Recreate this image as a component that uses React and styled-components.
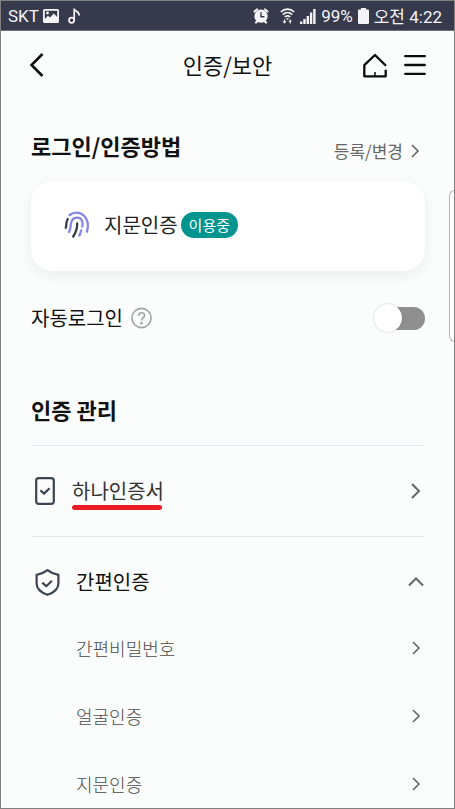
import React, { useState } from 'react'
import styled, { createGlobalStyle } from 'styled-components';

const subMenus = [
  { id: 1, name: '간편비밀번호' },
  { id: 2, name: '얼굴인증' },
  { id: 3, name: '지문인증' },
];

const PictureIcon = () => (
  <svg width="16" height="14" viewBox="0 0 16 14" aria-hidden="true">
    <path fill="#f4f4f7" fillRule="evenodd" d="M1.5 0h13A1.5 1.5 0 0 1 16 1.500v11a1.500 1.500 0 0 1-1.500 1.500h-13A1.500 1.500 0 0 1 0 12.500v-11A1.500 1.500 0 0 1 1.500 0zM1.800 1.800v8.200l3.200-3.200 2 1.600 3.800-4 3.400 3.600V1.800z" />
    <circle cx="4.500" cy="4" r="1.400" fill="#f4f4f7" />
  </svg>
);

const NoteIcon = () => (
  <svg width="13" height="16" viewBox="0 0 13 16" fill="none" stroke="#f4f4f7" strokeWidth="1.7" aria-hidden="true">
    <circle cx="3.600" cy="12.200" r="2.600" />
    <path d="M6.200 12.200V1.200c.5 2.200 5 1.500 5 6.300" strokeLinejoin="round" />
  </svg>
);

const AlarmIcon = () => (
  <svg width="16" height="16" viewBox="0 0 16 16" aria-hidden="true">
    <g stroke="#f4f4f7" strokeWidth="2.200" strokeLinecap="round">
      <path d="M1.500 3.500l2.500-2M14.500 3.500L12 1.500M3 14.500l2-2M13 14.500l-2-2" />
    </g>
    <circle cx="8" cy="8.200" r="6.600" fill="#f4f4f7" />
    <path d="M8 4.300v4.400h3.400" fill="none" stroke="#37394c" strokeWidth="1.400" />
  </svg>
);

const WifiIcon = () => (
  <svg width="15" height="16" viewBox="0 0 15 16" fill="none" stroke="#f4f4f7" strokeWidth="1.600" aria-hidden="true">
    <path d="M.8 4c3.800-3.800 9.600-3.800 13.400 0M2.800 6.600c2.800-2.700 6.600-2.700 9.400 0M4.800 9c1.700-1.500 3.700-1.500 5.400 0" />
    <path d="M5.800 10.200h3.400l-1.700 1.700z" fill="#f4f4f7" stroke="none" />
    <path d="M4.500 11.500v2.500M10.200 15.500V13" strokeWidth="1.200" />
    <path d="M2.500 13.200h4l-2 2.500zM8.500 13.500h3.400l-1.700-2.200z" fill="#f4f4f7" stroke="none" />
  </svg>
);

const SignalIcon = () => (
  <svg width="16" height="16" viewBox="0 0 16 16" fill="#f4f4f7" aria-hidden="true">
    <path d="M0 13.500h2.400V16H0zM3.300 11h2.400v5H3.300zM6.600 8H9v8H6.600zM9.900 4.500h2.400V16H9.900zM13.200 1h2.400v15h-2.400z" />
  </svg>
);

const BatteryIcon = () => (
  <svg width="11" height="16" viewBox="0 0 11 16" fill="#f4f4f7" aria-hidden="true">
    <path d="M3 0h5v1.600h2a1 1 0 0 1 1 1V15a1 1 0 0 1-1 1H1a1 1 0 0 1-1-1V2.600a1 1 0 0 1 1-1h2z" />
  </svg>
);

const BackIcon = () => (
  <svg width="16" height="26" viewBox="0 0 16 26" fill="none" stroke="#0c0c0c" strokeWidth="2.500" aria-hidden="true">
    <path d="M13.500 2L2.500 13l11 11" />
  </svg>
);

const HomeIcon = () => (
  <svg width="26" height="26" viewBox="0 0 26 26" fill="none" stroke="#0c0c0c" strokeWidth="2.300" strokeLinejoin="round" aria-hidden="true">
    <path d="M24 13.800L13 3 2.300 13.200V24.300h21.400v-6.600" />
    <path d="M13 20v4" strokeWidth="1.500" />
  </svg>
);

const MenuIcon = () => (
  <svg width="22" height="22" viewBox="0 0 22 22" fill="none" stroke="#0c0c0c" strokeWidth="2.300" strokeLinecap="round" aria-hidden="true">
    <path d="M1.200 2.200h19.600M1.200 11h19.600M1.200 19.800h19.600" />
  </svg>
);

const FingerprintIcon = () => (
  <svg width="26" height="28" viewBox="0 0 26 28" fill="none" strokeWidth="2.300" strokeLinecap="round" aria-hidden="true">
    <g stroke="#8587e3">
      <path d="M5.600 4C9.500.7 16 .6 20 4.700c4.200 4.400 4.600 10.300 2.900 16" />
      <path d="M5 21c2.200-3.300 1.300-6.200 2.100-9.300C8.800 5.200 17 5 18.300 11c.4 1.600.3 3 0 4.600" />
      <path d="M17.300 19.300c-.5 2.100-1.200 3.900-2 5.300" />
    </g>
    <g stroke="#343e4a">
      <path d="M3.700 8c-1.700 2.700-1.200 6.200-1.900 8.800" />
      <path d="M13.200 12.500c.2 5-1.700 9.500-4 13" />
    </g>
  </svg>
);

const PhoneCheckIcon = () => (
  <svg width="20" height="28" viewBox="0 0 20 28" fill="none" stroke="#3b4450" strokeWidth="2.200" strokeLinejoin="round" aria-hidden="true">
    <rect x="1.200" y="1.200" width="17.600" height="25.600" rx="2.600" />
    <path d="M5.400 13.200l3.600 3.400 5.600-5.400" />
  </svg>
);

const ShieldCheckIcon = () => (
  <svg width="26" height="28" viewBox="0 0 26 28" fill="none" stroke="#3b4450" strokeWidth="2.200" strokeLinejoin="round" aria-hidden="true">
    <path d="M12.500 2.200c2.900 2.300 6.700 3.900 10.900 4.700v8.500c0 5.200-4.300 9-10.900 11.400C5.900 24.400 1.600 20.600 1.600 15.400V6.900C5.800 6.100 9.600 4.500 12.500 2.200z" />
    <path d="M7.300 14.600l4 3.600 5.600-5.400" />
  </svg>
);

const QuestionIcon = () => (
  <svg width="22" height="22" viewBox="0 0 22 22" fill="none" stroke="#a3a3a3" strokeWidth="1.600" aria-hidden="true">
    <circle cx="10.500" cy="11" r="9.600" />
    <path d="M7.700 8.700c0-3.900 5.900-3.800 5.900-.3 0 2.300-3 2.400-3 5.200" strokeWidth="1.700" />
    <circle cx="10.500" cy="16.200" r="1.300" fill="#a3a3a3" stroke="none" />
  </svg>
);

const Arrow = ({ size, weight = 1.6 }) => (
  <svg width={size / 2 + 2} height={size} viewBox={`0 0 ${size / 2 + 2} ${size}`} fill="none" stroke="#666" strokeWidth={weight} aria-hidden="true">
    <path d={`M1 1l${size / 2 - 1} ${size / 2 - 1}L1 ${size - 1}`} />
  </svg>
);

const ArrowUp = () => (
  <svg width="16" height="10" viewBox="0 0 16 10" fill="none" stroke="#666" strokeWidth="2" aria-hidden="true">
    <path d="M1 8.500l7-7 7 7" />
  </svg>
);

function App() {
  const [autoLogin, setAutoLogin] = useState(false);
  const [open, setOpen] = useState(true);

  return (
    <Screen>
      <GlobalStyle />
      <StatusBar>
        <StatusGroup $gap="4px">
          <span>SKT</span>
          <PictureIcon />
          <Spacer />
          <NoteIcon />
        </StatusGroup>
        <StatusGroup $gap="5px">
          <AlarmIcon />
          <Spacer />
          <WifiIcon />
          <SignalIcon />
          <span>99%</span>
          <BatteryIcon />
          <span>오전 4:22</span>
        </StatusGroup>
      </StatusBar>
      <Header>
        <IconButton type="button" aria-label="뒤로"><BackIcon /></IconButton>
        <Title>인증/보안</Title>
        <HeaderActions>
          <IconButton type="button" aria-label="홈"><HomeIcon /></IconButton>
          <IconButton type="button" aria-label="메뉴"><MenuIcon /></IconButton>
        </HeaderActions>
      </Header>
      <Content>
        <SectionTop>
          <SectionTitle>로그인/인증방법</SectionTitle>
          <ChangeLink href="#change">
            등록/변경
            <Arrow size={14} />
          </ChangeLink>
        </SectionTop>
        <Card>
          <FingerprintIcon />
          <CardText>지문인증</CardText>
          <Badge>이용중</Badge>
        </Card>
        <AutoLogin>
          <label htmlFor="autoLogin">자동로그인</label>
          <IconButton type="button" aria-label="도움말"><QuestionIcon /></IconButton>
          <Toggle
            id="autoLogin"
            type="checkbox"
            checked={autoLogin}
            onChange={(e) => setAutoLogin(e.target.checked)}
          />
        </AutoLogin>
        <SectionTitle>인증 관리</SectionTitle>
        <Menus>
          <MenuRow type="button">
            <IconBox><PhoneCheckIcon /></IconBox>
            <MenuText $color="#333"><Marked>하나인증서</Marked></MenuText>
            <ArrowBox><Arrow size={16} weight={2} /></ArrowBox>
          </MenuRow>
          <MenuRow type="button" aria-expanded={open} onClick={() => setOpen(!open)}>
            <IconBox $wide><ShieldCheckIcon /></IconBox>
            <MenuText>간편인증</MenuText>
            <ArrowBox><ArrowUp /></ArrowBox>
          </MenuRow>
        </Menus>
        {open && (
          <SubList>
            {subMenus.map((menu) => (
              <li key={menu.id}>
                <SubLink href={`#menu${menu.id}`}>
                  {menu.name}
                  <ArrowBox><Arrow size={14} /></ArrowBox>
                </SubLink>
              </li>
            ))}
          </SubList>
        )}
      </Content>
      <EdgeHandle />
    </Screen>
  )
}

export default App;

const GlobalStyle = createGlobalStyle`
  * {
    box-sizing: border-box;
  }
  body {
    margin: 0;
    background-color: #fbfdfc;
    color: #111;
    font-family: "Noto Sans CJK KR", sans-serif;
  }
  button {
    font: inherit;
    color: inherit;
    background: none;
    border: none;
    padding: 0;
    cursor: pointer;
  }
  a {
    color: inherit;
    text-decoration: none;
  }
  svg {
    display: block;
    flex-shrink: 0;
  }
`

const Screen = styled.div`
  position: relative;
  min-height: 100vh;
  border: 1px solid #808080;
  overflow: hidden;
`

const StatusBar = styled.div`
  display: flex;
  justify-content: space-between;
  height: 30px;
  padding: 0 12px 0 7px;
  background-color: #37394c;
  border-bottom: 1px solid #6f707c;
  color: #f4f4f7;
  font-family: Roboto, "Noto Sans CJK KR", sans-serif;
  font-size: 17px;
`

const StatusGroup = styled.div`
  display: flex;
  align-items: center;
  gap: ${(props) => props.$gap};
`

const Spacer = styled.span`
  width: 1px;
`

const Header = styled.header`
  display: grid;
  grid-template-columns: 1fr auto 1fr;
  align-items: center;
  height: 68px;
  padding: 0 28px;
`

const IconButton = styled.button`
  display: flex;
  justify-self: start;
`

const Title = styled.h1`
  margin: 0;
  padding-bottom: 2px;
  font-size: 22px;
  font-weight: 400;
  line-height: 32px;
`

const HeaderActions = styled.div`
  display: flex;
  align-items: center;
  justify-content: flex-end;
  gap: 16px;
`

const Content = styled.main`
  padding: 32px 29px 10px 30px;
`

const SectionTop = styled.div`
  display: flex;
  align-items: flex-end;
  justify-content: space-between;
`

const SectionTitle = styled.h2`
  margin: 0;
  padding-bottom: 4px;
  font-size: 22px;
  font-weight: 700;
  line-height: 28px;
`

const ChangeLink = styled.a`
  display: flex;
  align-items: center;
  gap: 8px;
  padding: 0 5px 2px 0;
  color: #666;
  font-size: 17px;
  line-height: 20px;
`

const Card = styled.section`
  display: flex;
  align-items: center;
  height: 90px;
  margin-top: 18px;
  padding: 0 33px 2px;
  border-radius: 22px;
  background-color: #fff;
  box-shadow: 0 4px 14px rgba(0, 0, 0, 0.07);
`

const CardText = styled.span`
  margin: 0 3px 0 14px;
  color: #222;
  font-size: 20px;
  line-height: 28px;
`

const Badge = styled.span`
  padding: 0 8px;
  border-radius: 13px;
  background-color: #02958f;
  color: #fff;
  font-size: 15px;
  line-height: 26px;
`

const AutoLogin = styled.div`
  display: flex;
  align-items: center;
  gap: 8px;
  margin: 33px 0 63px;
  font-size: 20px;
  line-height: 28px;
`

const Toggle = styled.input`
  appearance: none;
  display: flex;
  align-items: center;
  width: 48px;
  height: 23px;
  margin: 0 0 0 auto;
  border-radius: 12px;
  background-color: ${(props) => (props.checked ? '#02958f' : '#8f8f8f')};
  cursor: pointer;
  &::before {
    content: '';
    flex-shrink: 0;
    width: 28px;
    height: 28px;
    margin-left: ${(props) => (props.checked ? '23px' : '-3px')};
    border-radius: 50%;
    background-color: #fff;
    box-shadow: 0 0 2px rgba(0, 0, 0, 0.25);
  }
`

const Menus = styled.div`
  margin-top: 18px;
`

const MenuRow = styled.button`
  display: flex;
  align-items: center;
  width: 100%;
  height: 91px;
  padding-left: 4px;
  border-top: 1px solid #e6e7ed;
  text-align: left;
`

const IconBox = styled.span`
  width: ${(props) => (props.$wide ? '41px' : '37px')};
`

const MenuText = styled.span`
  color: ${(props) => props.$color || '#111'};
  font-size: 20px;
  line-height: 28px;
`

const Marked = styled.span`
  position: relative;
  &::after {
    content: '';
    position: absolute;
    left: 0;
    right: 2px;
    bottom: -5px;
    height: 5px;
    border-radius: 3px;
    background-color: #ed1c24;
  }
`

const ArrowBox = styled.span`
  display: flex;
  justify-content: center;
  width: 18px;
  margin-left: auto;
`

const SubList = styled.ul`
  display: flex;
  flex-direction: column;
  gap: 40px;
  margin: 0;
  padding: 7px 0 0 45px;
  list-style: none;
`

const SubLink = styled.a`
  display: flex;
  align-items: center;
  color: #4a4a4a;
  font-size: 18px;
  font-weight: 300;
  line-height: 28px;
`

const EdgeHandle = styled.div`
  position: absolute;
  top: 189px;
  right: -1px;
  width: 6px;
  height: 152px;
  border: 1px solid #b5b5b5;
  border-right: none;
  border-radius: 6px 0 0 6px;
  background-color: #fff;
`
